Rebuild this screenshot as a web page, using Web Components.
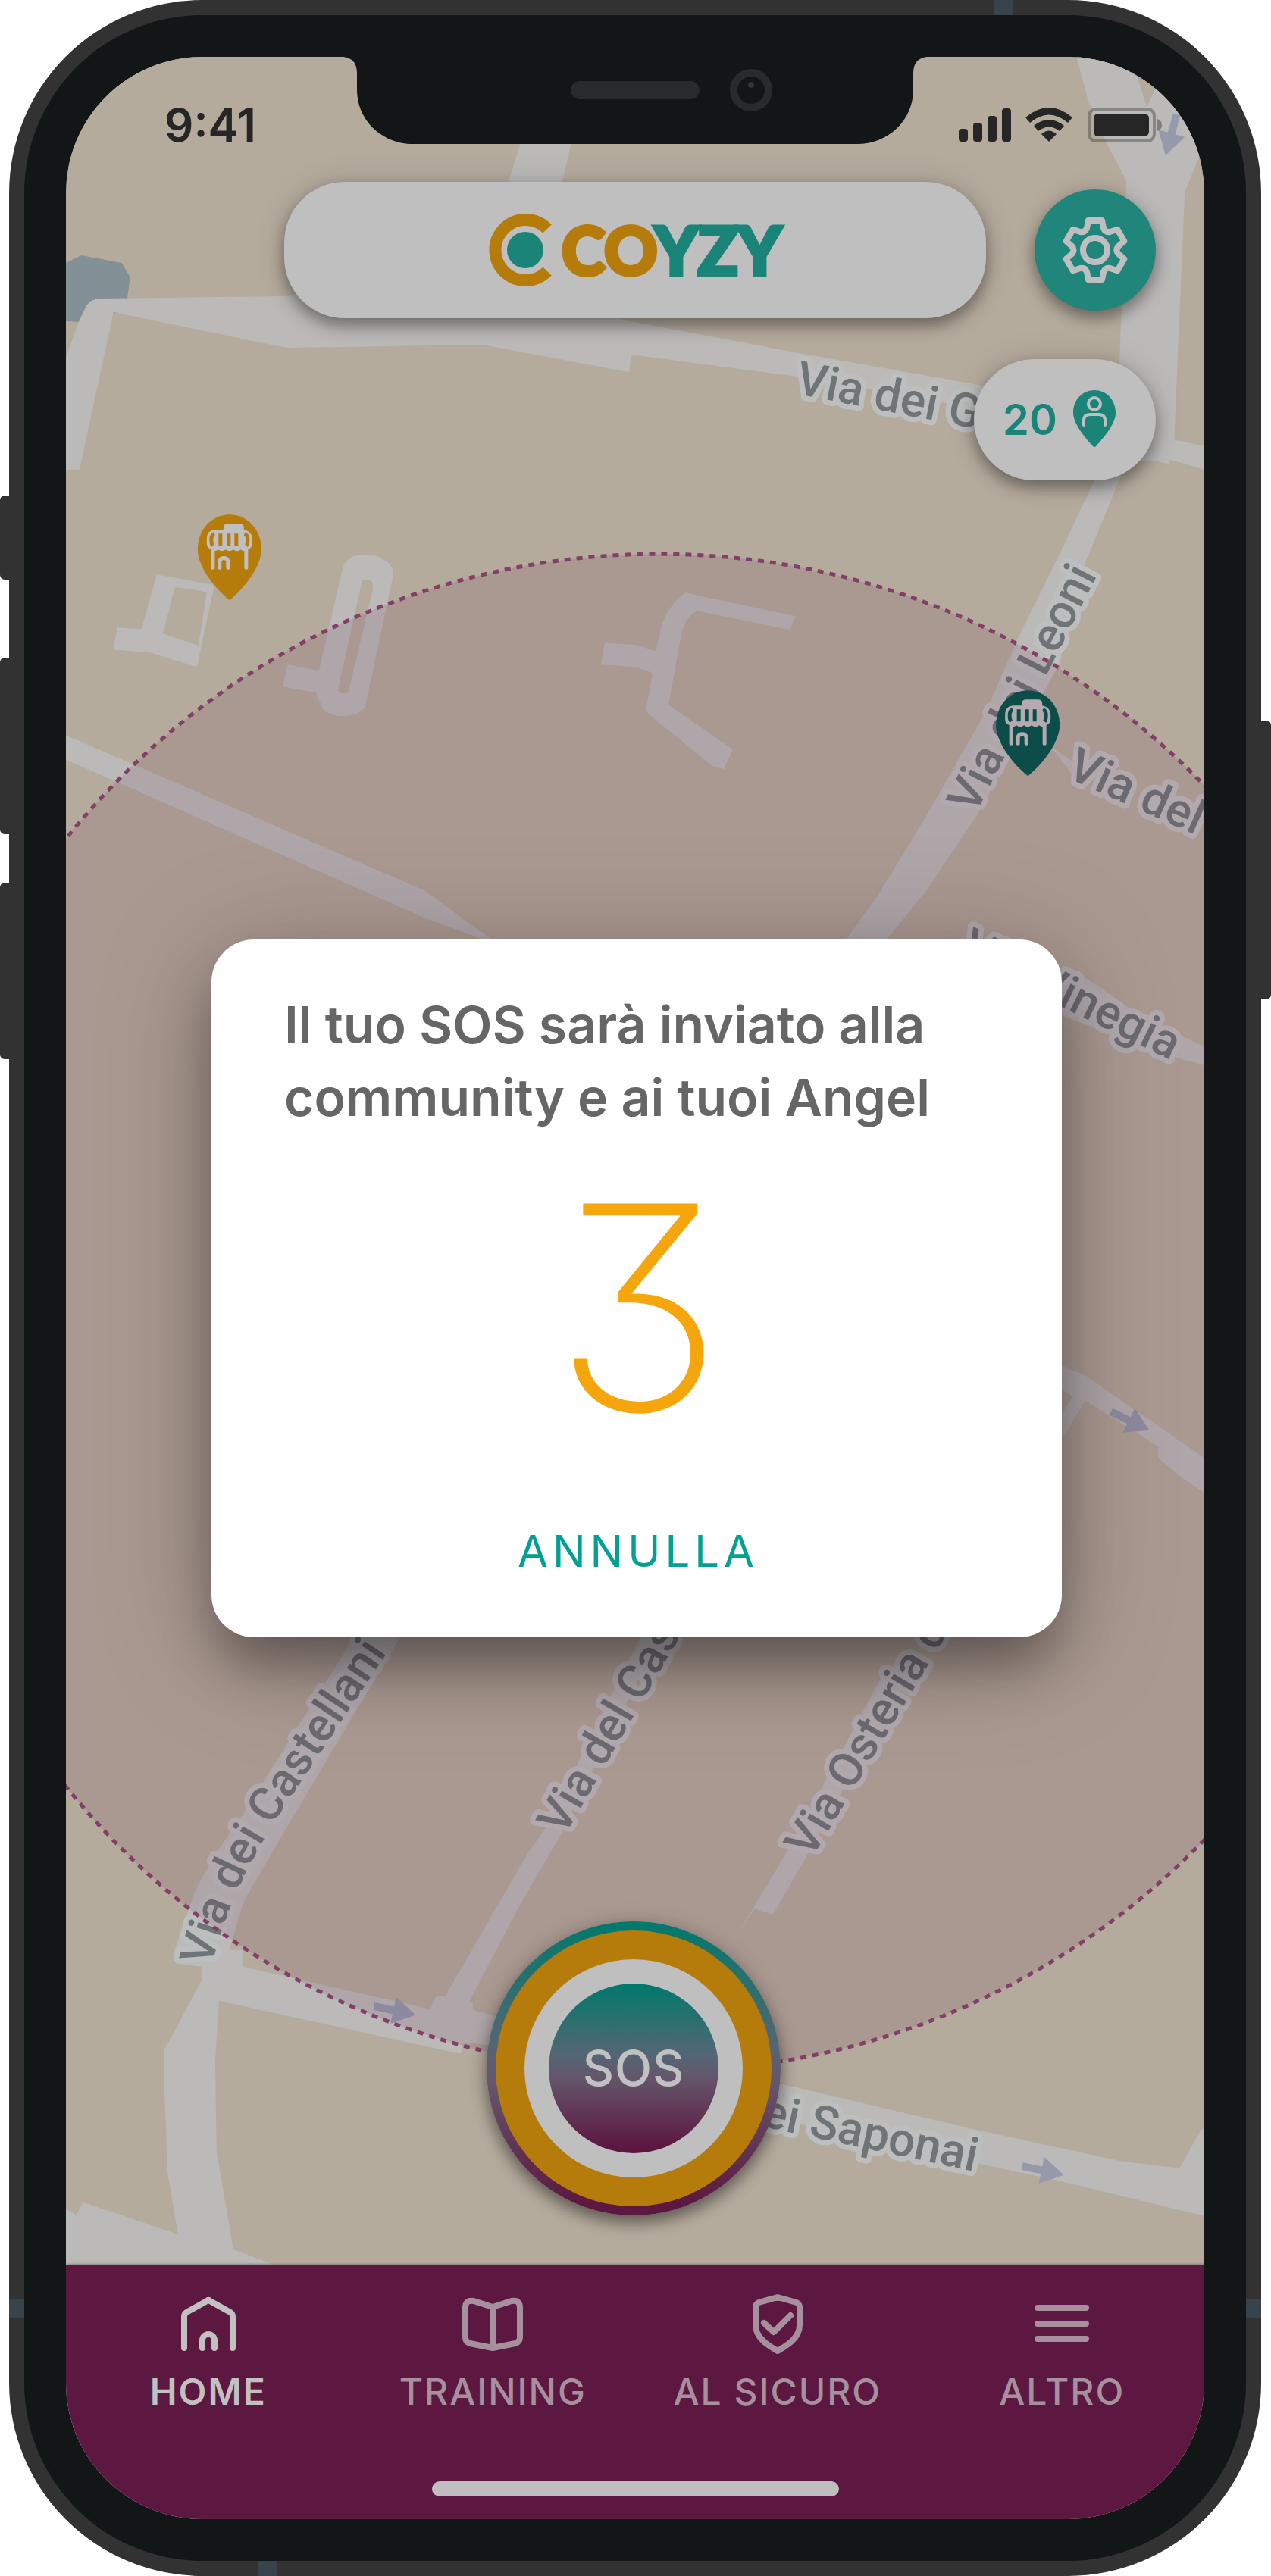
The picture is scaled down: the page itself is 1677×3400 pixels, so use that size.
<!DOCTYPE html>
<html lang="it">
<head>
<meta charset="utf-8">
<meta name="viewport" content="width=device-width, initial-scale=1">
<title>Coyzy</title>
<style>
  html, body { margin: 0; background: #fff; }
  body { font-family: Inter, "Liberation Sans", sans-serif; display: flex; min-height: 100vh; }
  phone-frame { flex: 1; }
</style>
</head>
<body>
<phone-frame>
  <map-view slot="back"></map-view>
  <status-bar time="9:41"></status-bar>
  <app-header></app-header>
  <nearby-badge>20</nearby-badge>
  <sos-button>SOS</sos-button>
  <tab-bar>
    <tab-item icon="home" active>HOME</tab-item>
    <tab-item icon="book">TRAINING</tab-item>
    <tab-item icon="shield">AL SICURO</tab-item>
    <tab-item icon="menu">ALTRO</tab-item>
  </tab-bar>
  <countdown-dialog slot="front" count="3">
    Il tuo SOS sarà inviato alla community e ai tuoi Angel
    <span slot="action">ANNULLA</span>
  </countdown-dialog>
</phone-frame>

<script>
const define = (name, render) => customElements.define(name, class extends HTMLElement {
  connectedCallback() {
    if (this.shadowRoot) return;
    this.attachShadow({ mode: 'open' }).innerHTML = render(this);
  }
});

/* Device body: side rails with hardware keys, bezel, notch and screen. */
define('phone-frame', () => `
<style>
  :host { display: flex; }
  .rail { display: flex; flex-direction: column; flex: none; }
  .left { width: 12px; padding-top: 654px; }
  .right { width: 13px; padding-top: 951px; }
  .key { background: #313231; height: 233px; }
  .left .key { border-radius: 6px 0 0 6px; margin-bottom: 64px; }
  .left .key:first-child { height: 111px; margin-bottom: 103px; }
  .right .key { height: 368px; border-radius: 0 6px 6px 0; }
  .shell { flex: 1; display: flex; position: relative; background: #313231; border-radius: 255px; padding: 20px; }
  .band { position: absolute; background: #37444b; }
  .v { width: 24px; height: 20px; }
  .h { width: 20px; height: 24px; bottom: 341px; }
  .bezel { flex: 1; display: flex; background: #121616; border-radius: 235px; padding: 55px; position: relative; }
  .screen { flex: 1; min-width: 0; display: flex; flex-direction: column; position: relative; isolation: isolate;
    overflow: hidden; border-radius: 180px; background: #b5ab9d; }
  .notch { position: absolute; top: 0; left: 50%; margin-left: -385px; width: 770px; height: 116px; }
  slot[name=back]::slotted(*) { position: absolute; inset: 0; z-index: -1; }
  slot[name=front]::slotted(*) { position: absolute; inset: 0; }
</style>
<div class="rail left"><div class="key"></div><div class="key"></div><div class="key"></div></div>
<div class="shell">
  <div class="band v" style="top:0;right:328px"></div>
  <div class="band v" style="bottom:0;left:329px"></div>
  <div class="band h" style="left:0"></div>
  <div class="band h" style="right:0"></div>
  <div class="bezel"><div class="screen">
    <slot name="back"></slot>
    <slot></slot>
    <svg class="notch" viewBox="453 75 770 116" aria-hidden="true">
      <path fill="#121616" d="M453 74V75Q471 77 471 97V118C471 160 505 190 545 190H1131C1171 190 1205 160 1205 118V97Q1205 77 1223 75V74Z"/>
      <rect x="753" y="107" width="170" height="24" rx="12" fill="#272b2e"/>
      <circle cx="991" cy="119" r="23" fill="none" stroke="#272b2e" stroke-width="10"/>
      <circle cx="991" cy="112" r="4" fill="#313335"/>
    </svg>
    <slot name="front"></slot>
  </div></div>
</div>
<div class="rail right"><div class="key"></div></div>`);

/* Street map, search radius and shop pins. */
const shopPin = (x, y, fill, glyph) => `
<g transform="translate(${x} ${y})" fill="none" stroke-linecap="round">
  <path fill="${fill}" d="M42 0C66 0 84 20 84 46C84 68 62 97 42 113C22 97 0 68 0 46C0 20 18 0 42 0Z"/>
  <path fill="${glyph}" d="M34 20V17Q34 12 40 12H55Q61 12 61 17V20Q72 22 72 32V38Q72 44 66 46Q61 50 57 46Q52 50 47 46Q42 50 37 46Q32 50 27 46Q22 50 18 46Q12 44 12 38V32Q12 20 24 20Z"/>
  <path stroke="${fill}" stroke-width="5" stroke-linecap="butt" d="M22 25Q18 27 18 33T20 41M30 25V41M41 25V41M51 25V41M62 25Q66 27 66 33T64 41"/>
  <path stroke="${glyph}" stroke-width="5" d="M20 46V70M64 46V70M29 70V61A6 6 0 0 1 40 61V70"/>
</g>`;
const arrow = (x, y, angle) => `<path fill="#9599ab" transform="translate(${x} ${y}) rotate(${angle})" d="M-28 -5H-2V-18L28 0L-2 18V5H-28Z"/>`;
const label = (x, y, angle, text) => `<text transform="translate(${x} ${y}) rotate(${angle})">${text}</text>`;
define('map-view', () => `
<style>
  :host { display: block; }
  svg { width: 100%; height: 100%; display: block; }
  text { font: 500 62px Roboto, "Liberation Sans", sans-serif; fill: #6f7577; stroke: #bdbebe; stroke-width: 14px;
    stroke-linejoin: round; paint-order: stroke; }
</style>
<svg viewBox="87 75 1502 3249" preserveAspectRatio="xMidYMid slice" role="img" aria-label="Mappa">
  <rect x="87" y="75" width="1502" height="3249" fill="#b5ab9d"/>
  <path fill="#839096" d="M80 350L108 337L161 347L172 366L166 410L103 425L80 423Z"/>
  <g fill="#bbbab8">
    <path d="M690 180H756L704 400H620Z"/>
    <path d="M87 473L104 425L112 408Q118 394 134 394L370 391L640 380L837 425L1054 466L1292 508L1549 580L1589 589V620L1543 606V612L1507 605L1292 540L1054 497L833 468L830 491L637 455L378 459L150 412L105 620H87Z"/>
    <path d="M1419 70L1436 135L1461 191L1486 238L1477 475L1475 608H1543L1549 580L1563 253L1582 207L1600 170V70H1538L1523 120L1513 141L1490 70Z"/>
    <path d="M1475 560L1441 640L1394 739L1343 842L1300 940L1223 1075L1158 1182L1100 1262H1152L1223 1174L1292 1071L1397 877L1433 739L1474 640L1510 560Z"/>
    <path fill-rule="evenodd" d="M207 758L283 772L260 880L198 861L150 857L155 828L187 830ZM231 775L215 836L262 852L273 782Q250 776 231 775Z"/>
    <path fill-rule="evenodd" d="M453 747Q460 732 480 732T503 737Q520 745 519 758L482 933Q472 945 453 945T426 935L417 914L373 906L380 877L421 885ZM478 766L446 910Q448 918 460 913L490 786Q498 760 478 766Z"/>
    <path d="M87 970L300 1070L560 1175L650 1241L87 1002Z"/>
    <path d="M87 970L560 1175L650 1241H640L560 1211L87 1002Z"/>
    <path d="M798 848L840 851L865 859L874 822Q884 796 904 782L1050 813L1042 831L920 806Q908 810 900 832L882 930L967 989L955 1015L939 1010L858 944Q852 940 853 933L861 888L840 880L793 877Z"/>
    <path d="M1385 984L1425 1012L1415 1022Z"/>
    <path d="M1401 1274L1443 1297L1490 1330L1557 1366L1589 1381V1406L1540 1392L1401 1340Z"/>
    <path d="M1390 1797L1432 1815L1589 1924V1970L1553 1945L1528 1924V1909L1432 1848L1401 1899V1866L1415 1843L1390 1826Z"/>
    <path d="M480 2140L375 2307L320 2395Q280 2450 257 2497L230 2575L233 2591L266 2595V2613L217 2705L216 2738L219 2800L221 2865L235 2948L110 2906L101 2922L87 2915V2995H375L361 2988L308 2968L286 2840L284 2720L289 2640L608 2710L611 2695L660 2700V2662L624 2652V2642H619L683 2519L742 2417L870 2160H845L720 2412L696 2446L587 2635L576 2633L568 2651L320 2595V2573L303 2573L321 2510L375 2417L540 2140Z"/>
    <path d="M1038 2444L994 2517L976 2548L996 2519L1020 2526L1067 2444L1200 2200H1170Z"/>
    <path d="M990 2740L1265 2805L1480 2852L1556 2861L1584 2811L1600 2800V2928L1589 2924L1399 2878L1292 2855L1000 2790Z"/>
  </g>
  ${arrow(521, 2653, 12)}${arrow(1376, 2864, 12)}${arrow(1491, 1875, 26)}${arrow(1545, 178, 105)}
  ${label(1048, 519, 11, 'Via dei G')}
  ${label(1286, 1076, -63, 'Via dei Leoni')}
  ${label(1405, 1025, 24, 'Via del')}
  ${label(1264, 1262, 26, 'Via Vinegia')}
  ${label(744, 2424, -60, 'Via del Castello')}
  ${label(1070, 2454, -59, 'Via Osteria del Guanto')}
  ${label(866, 2776, 12, 'Via dei Saponai')}
  <path id="castellani" fill="none" d="M279 2596Q292 2540 320 2480Q342 2436 371 2390L534 2146"/>
  <text><textPath href="#castellani">Via dei Castellani</textPath></text>
  <circle cx="869" cy="1732" r="1001" fill="#5c1a40" fill-opacity=".12"/>
  <circle cx="869" cy="1732" r="1001" fill="none" stroke="#843f69" stroke-width="5" stroke-dasharray="8 8"/>
  ${shopPin(261, 679, '#b57c0b', '#c0c0c0')}${shopPin(1314, 911, '#0c4d4a', '#b6aab0')}
</svg>`);

define('status-bar', el => `
<style>
  :host { display: flex; justify-content: space-between; align-items: center; padding: 60px 56px 45px 130px;
    font-size: 60px; line-height: 60px; font-weight: 600; color: #262626; }
  svg { width: 268px; height: 48px; display: block; }
</style>
<span>${el.getAttribute('time')}</span>
<svg viewBox="1264 142 268 48" fill="#262626" aria-hidden="true">
  <rect x="1264" y="171" width="12" height="17" rx="4"/><rect x="1283" y="163" width="12" height="25" rx="4"/>
  <rect x="1302" y="154" width="12" height="34" rx="4"/><rect x="1321" y="144" width="12" height="44" rx="4"/>
  <path d="M1352 156Q1383 130 1414 156L1408 163Q1383 142 1358 163Z"/>
  <path d="M1363 167Q1383 151 1403 167L1397 174Q1383 163 1369 174Z"/>
  <path d="M1373 178Q1383 169 1393 178L1383 188Z"/>
  <rect x="1436" y="145" width="86" height="42" rx="9" fill="none" stroke="#262626" stroke-opacity=".35" stroke-width="4"/>
  <rect x="1442" y="151" width="73" height="30" rx="6"/>
  <path fill-opacity=".4" d="M1526 158Q1532 160 1532 166T1526 174Z"/>
</svg>`);

/* Gear outline: one tooth repeated six times round the centre. */
const gearPath = () => {
  const turn = (x, y, k) => {
    const a = k * Math.PI / 3;
    return (x * Math.cos(a) - y * Math.sin(a)).toFixed(1) + ' ' + (x * Math.sin(a) + y * Math.cos(a)).toFixed(1);
  };
  let d = '';
  for (let k = 0; k < 6; k++)
    d += (k ? 'L' : 'M') + turn(-11, -29, k) + 'L' + turn(-9, -39, k) + 'L' + turn(9, -39, k) + 'L' + turn(11, -29, k)
      + 'Q' + turn(13, -23, k) + ' ' + turn(-11, -29, k + 1);
  return d + 'Z';
};
define('app-header', () => `
<style>
  :host { display: grid; grid-template-columns: 160px 1fr 160px; gap: 64px; padding: 0 64px; align-items: center; }
  .brand { grid-column: 2; height: 180px; border-radius: 80px; background: #bfbfbf; display: flex; align-items: center;
    justify-content: center; gap: 12px; box-shadow: 0 10px 20px rgba(0,0,0,.36), 0 0 40px rgba(0,0,0,.14); }
  .brand svg { width: 84px; height: 96px; }
  .name { font: 900 87px/96px Lato, Inter, sans-serif; color: #b57c0b; -webkit-text-stroke: 5px #b57c0b; }
  .name b { font-weight: 900; color: #1a8479; -webkit-text-stroke-color: #1a8479; }
  button { width: 160px; height: 160px; border: 0; border-radius: 50%; background: #20857b; padding: 0; display: grid;
    place-items: center; box-shadow: 0 10px 20px rgba(0,0,0,.36), 0 0 30px rgba(0,0,0,.12); }
  button svg { width: 96px; height: 96px; }
</style>
<div class="brand">
  <svg viewBox="0 0 84 96" aria-hidden="true">
    <path fill="none" stroke="#b57c0b" stroke-width="16" d="M77 20A40 40 0 1 0 77 76"/>
    <circle cx="48" cy="48" r="24" fill="#1a8479"/>
  </svg>
  <span class="name">CO<b>YZY</b></span>
</div>
<button aria-label="Impostazioni"><svg viewBox="-48 -48 96 96" fill="none" stroke="#bfbfbf" stroke-width="8" stroke-linejoin="round">
  <path d="${gearPath()}"/><circle r="16"/></svg></button>`);

define('nearby-badge', () => `
<style>
  :host { display: flex; align-self: flex-end; align-items: center; justify-content: space-between; box-sizing: border-box;
    width: 240px; height: 160px; margin: 54px 64px 0 0; padding: 0 53px 0 38px; border-radius: 80px; background: #bfbfbf;
    color: #1a8479; font-size: 56px; font-weight: 600; box-shadow: 0 10px 20px rgba(0,0,0,.36), 0 0 40px rgba(0,0,0,.14); }
  svg { width: 56px; height: 75px; margin-top: -4px; }
</style>
<slot></slot>
<svg viewBox="0 0 56 75" fill="none" stroke="#bfbfbf" stroke-width="4" stroke-linecap="round" aria-hidden="true">
  <path fill="#1a8479" stroke="none" d="M28 0C43 0 56 12 56 30C56 46 36 67 31 73Q28 77 25 73C20 67 0 46 0 30C0 12 13 0 28 0Z"/>
  <circle cx="28" cy="18" r="8"/><path d="M14 46V40Q14 32 22 32H34Q42 32 42 40V46"/>
</svg>`);

define('sos-button', () => `
<style>
  :host { display: flex; justify-content: center; margin-top: auto; padding: 0 4px 66px 0; --g: linear-gradient(#00796c, #546674 42%, #65566c 55%, #5c1840 96%); }
  button, button span { display: grid; place-items: center; border-radius: 50%; box-sizing: border-box; }
  button { width: 388px; height: 388px; border: 0; padding: 12px; background: var(--g); font: 500 64px/64px Inter, sans-serif;
    color: #c2c1c2; letter-spacing: 1px; box-shadow: 0 10px 20px rgba(0,0,0,.42), 0 0 30px rgba(0,0,0,.14); }
  .ring { width: 364px; height: 364px; background: #b57c0b; }
  .gap { width: 288px; height: 288px; background: #bfbfbf; }
  .core { width: 224px; height: 224px; background: var(--g); }
</style>
<button><span class="ring"><span class="gap"><span class="core"><slot></slot></span></span></span></button>`);

define('tab-bar', () => `
<style>
  :host { display: block; background: #5c1840; padding: 37px 0 30px; box-shadow: 0 -1px 3px rgba(0,0,0,.5); }
  nav { display: flex; height: 248px; }
  .home { width: 537px; height: 20px; border-radius: 10px; background: #bfbfbf; margin: 0 auto; }
</style>
<nav><slot></slot></nav><div class="home"></div>`);

const tabIcons = {
  home: 'M8 72V31Q8 27 11 25L38 10Q40 8 42 10L69 25Q72 27 72 31V72M32 72V62A8 8 0 0 1 48 62V72',
  book: 'M40 18L15 10Q4 8 4 19V58Q4 64 10 66L40 72L70 66Q76 64 76 58V19Q76 8 65 10ZM40 18V72',
  shield: 'M40 5L65 12Q69 14 69 18V42C69 60 50 70 40 76C30 70 11 60 11 42V18Q11 14 15 12ZM22 39L35 51L57 29',
  menu: 'M8 19H72M8 40H72M8 60H72'
};
define('tab-item', el => `
<style>
  :host { flex: 1 1 0; min-width: 0; display: block; }
  a { display: flex; flex-direction: column; align-items: center; gap: 22px; text-decoration: none; color: #a6909e;
    font-size: 48px; line-height: 56px; font-weight: 500; letter-spacing: 2px; white-space: nowrap; }
  :host([active]) a { color: #c2c0c1; font-weight: 600; }
  svg { width: 80px; height: 80px; }
</style>
<a href="#"><svg viewBox="0 0 80 80" fill="none" stroke="currentColor" stroke-width="8" stroke-linecap="round" stroke-linejoin="round" aria-hidden="true"><path d="${tabIcons[el.getAttribute('icon')]}"/></svg><span><slot></slot></span></a>`);

define('countdown-dialog', el => `
<style>
  :host { display: flex; align-items: center; padding: 0 188px 0 192px; }
  section { flex: 1; display: flex; flex-direction: column; align-items: center; background: #fff; border-radius: 56px;
    padding: 64px 92px 64px 96px; box-shadow: 0 44px 70px -10px rgba(0,0,0,.34), 0 20px 150px rgba(0,0,0,.26); }
  p { margin: 0; align-self: stretch; font-size: 68px; line-height: 96px; font-weight: 600; color: #666; }
  .count { margin-top: 38px; font-size: 376px; line-height: 384px; font-weight: 200; color: #f4a60c; font-feature-settings: "cv09"; }
  button { margin-top: 79px; height: 100px; padding: 0 40px; border: 0; background: none; color: #00a092;
    font: 400 58px/100px Inter, sans-serif; letter-spacing: 6px; }
</style>
<section role="dialog" aria-label="Invio SOS">
  <p><slot></slot></p>
  <div class="count">${el.getAttribute('count')}</div>
  <button><slot name="action"></slot></button>
</section>`);
</script>
</body>
</html>
